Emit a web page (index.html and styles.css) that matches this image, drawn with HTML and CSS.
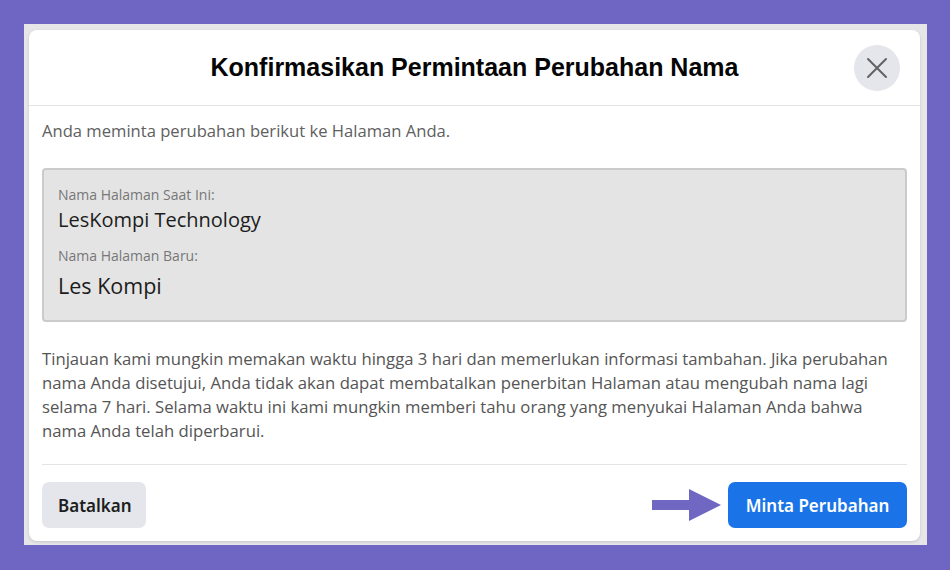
FILE: index.html
```html
<!DOCTYPE html>
<html lang="id">
<head>
  <meta charset="UTF-8">
  <meta name="viewport" content="width=device-width, initial-scale=1.0">
  <title>Konfirmasikan Permintaan Perubahan Nama</title>
  <link rel="stylesheet" href="styles.css">
</head>
<body>
  <div class="page">
    <div class="modal">
      <div class="modal-header">
        <h1>Konfirmasikan Permintaan Perubahan Nama</h1>
        <button class="close-btn" aria-label="Tutup">
          <svg width="22" height="22" viewBox="0 0 22 22">
            <path d="M2 2 L20 20 M20 2 L2 20" stroke="#606266" stroke-width="2" stroke-linecap="round" fill="none"/>
          </svg>
        </button>
      </div>

      <div class="modal-body">
        <p class="intro">Anda meminta perubahan berikut ke Halaman Anda.</p>

        <div class="name-box">
          <div class="label">Nama Halaman Saat Ini:</div>
          <div class="current-name">LesKompi Technology</div>
          <div class="label">Nama Halaman Baru:</div>
          <div class="new-name">Les Kompi</div>
        </div>

        <p class="notice">Tinjauan kami mungkin memakan waktu hingga 3 hari dan memerlukan informasi tambahan. Jika perubahan nama Anda disetujui, Anda tidak akan dapat membatalkan penerbitan Halaman atau mengubah nama lagi selama 7 hari. Selama waktu ini kami mungkin memberi tahu orang yang menyukai Halaman Anda bahwa nama Anda telah diperbarui.</p>
      </div>

      <div class="modal-footer">
        <button class="btn btn-cancel">Batalkan</button>
        <div class="confirm-wrap">
          <svg class="arrow" width="70" height="32" viewBox="0 0 70 32">
            <path d="M0 11 H37 V0 L69 16 L37 32 V21 H0 Z" fill="#6f67c1"/>
          </svg>
          <button class="btn btn-primary">Minta Perubahan</button>
        </div>
      </div>
    </div>
  </div>
</body>
</html>
```

FILE: styles.css
```css
* {
    margin: 0;
    padding: 0;
    box-sizing: border-box;
}

body {
    width: 950px;
    height: 570px;
    background: #6e66c2;
    padding: 24px 23px 25px 24px;
    font-family: 'Open Sans', 'Noto Sans', sans-serif;
    overflow: hidden;
}

.page {
    height: 521px;
    background: #e6e6e8;
    padding: 6px 7px 4px 5px;
}

.modal {
    height: 511px;
    background: #fff;
    border-radius: 8px;
    box-shadow: 0 1px 3px rgba(0, 0, 0, 0.15);
    display: flex;
    flex-direction: column;
}

.modal-header {
    position: relative;
    height: 76px;
    border-bottom: 1px solid #e4e4e4;
    display: flex;
    align-items: center;
    justify-content: center;
}

.modal-header h1 {
    font-family: 'Liberation Sans', Arial, sans-serif;
    font-size: 25px;
    font-weight: bold;
    color: #050505;
}

.close-btn {
    position: absolute;
    right: 20px;
    top: 15px;
    width: 46px;
    height: 46px;
    border: none;
    border-radius: 50%;
    background: #e4e6eb;
    display: flex;
    align-items: center;
    justify-content: center;
}

.modal-body {
    padding: 0 13px;
}

.intro {
    margin-top: 15px;
    font-size: 16.6px;
    line-height: 20px;
    color: #606060;
}

.name-box {
    margin-top: 27px;
    height: 154px;
    background: #e4e4e4;
    border: 2px solid #cbcbcb;
    border-radius: 4px;
    padding: 16px 14px;
}

.label {
    font-size: 14px;
    line-height: 18px;
    color: #777;
}

.current-name {
    font-size: 20px;
    line-height: 32px;
    color: #1c1c1c;
    margin-bottom: 11px;
}

.new-name {
    font-size: 21.5px;
    line-height: 42px;
    color: #1c1c1c;
}

.notice {
    margin-top: 25px;
    font-size: 16.7px;
    line-height: 24px;
    color: #555;
}

.modal-footer {
    margin: auto 13px 0;
    border-top: 1px solid #e4e4e4;
    padding: 17px 0 13px;
    display: flex;
    justify-content: space-between;
    align-items: center;
}

.confirm-wrap {
    display: flex;
    align-items: center;
    gap: 6px;
}

.btn {
    height: 46px;
    border: none;
    border-radius: 7px;
    padding: 0 16px;
    font-family: 'Noto Sans', sans-serif;
    font-size: 17px;
    font-weight: 600;
    cursor: pointer;
}

.btn-cancel {
    width: 104px;
    background: #e4e6eb;
    color: #1c1e21;
}

.btn-primary {
    width: 179px;
    background: #1a74e8;
    color: #fff;
}
```
